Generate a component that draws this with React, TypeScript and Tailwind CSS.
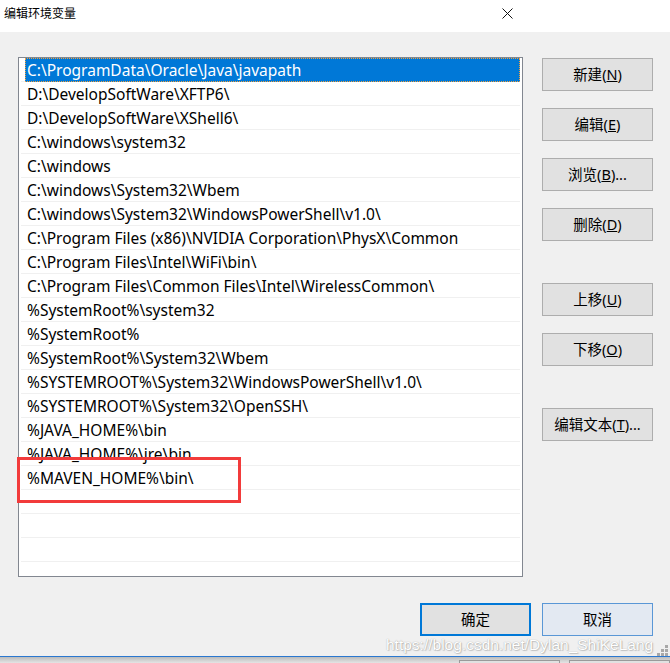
import React from "react";

const items = [
  "C:\\ProgramData\\Oracle\\Java\\javapath",
  "D:\\DevelopSoftWare\\XFTP6\\",
  "D:\\DevelopSoftWare\\XShell6\\",
  "C:\\windows\\system32",
  "C:\\windows",
  "C:\\windows\\System32\\Wbem",
  "C:\\windows\\System32\\WindowsPowerShell\\v1.0\\",
  "C:\\Program Files (x86)\\NVIDIA Corporation\\PhysX\\Common",
  "C:\\Program Files\\Intel\\WiFi\\bin\\",
  "C:\\Program Files\\Common Files\\Intel\\WirelessCommon\\",
  "%SystemRoot%\\system32",
  "%SystemRoot%",
  "%SystemRoot%\\System32\\Wbem",
  "%SYSTEMROOT%\\System32\\WindowsPowerShell\\v1.0\\",
  "%SYSTEMROOT%\\System32\\OpenSSH\\",
  "%JAVA_HOME%\\bin",
  "%JAVA_HOME%\\jre\\bin",
  "%MAVEN_HOME%\\bin\\",
  "",
  "",
  "",
  "",
];

const uiFont = { fontFamily: '"Noto Sans", "Noto Sans CJK SC", sans-serif' };

function Btn({ label, u, tail = "", mt = "" }: { label: string; u: string; tail?: string; mt?: string }) {
  return (
    <div
      className={`h-[33px] w-[111px] border border-[#adadad] bg-[#e1e1e1] flex items-center justify-center text-[14.5px] text-black ${mt}`}
    >
      <span>
        {label}(<u>{u}</u>){tail}
      </span>
    </div>
  );
}

export default function App() {
  return (
    <div className="relative w-[670px] h-[663px] overflow-hidden bg-[#f0f0f0]" style={uiFont}>
      {/* title bar */}
      <div className="h-[32px] bg-white flex items-start justify-between">
        <div className="pl-[4px] pt-[5px] text-[12px] leading-[16px] text-black" style={{ fontFamily: '"Noto Sans CJK SC", sans-serif' }}>
          编辑环境变量
        </div>
        <svg className="mt-[8px] mr-[157px]" width="11" height="11" viewBox="0 0 11 11">
          <path d="M0.5 0.5 L10.5 10.5 M10.5 0.5 L0.5 10.5" stroke="#111" strokeWidth="1" fill="none" />
        </svg>
      </div>

      {/* body */}
      <div className="flex pt-[25px]">
        <div className="ml-[18px] w-[505px] h-[520px] border border-[#828790] bg-white overflow-hidden">
          {items.map((t, i) => (
            <div key={i} className="h-[24px] mx-[2px] border-b border-[#f0f0f0]">
              {i === 0 ? (
                <div className="ml-[4px] h-[24px] -mb-[1px] bg-[#0078d7] border border-dotted border-[#f3a13c] text-white text-[15.5px] leading-[23px] pl-[1px] whitespace-nowrap">
                  {t}
                </div>
              ) : (
                <div className="ml-[6px] h-[23px] text-[15.5px] leading-[24px] text-black whitespace-nowrap">
                  {t}
                </div>
              )}
            </div>
          ))}
        </div>
        <div className="ml-[19px] pt-[1px] flex flex-col">
          <Btn label="新建" u="N" />
          <Btn label="编辑" u="E" mt="mt-[17px]" />
          <Btn label="浏览" u="B" tail="..." mt="mt-[17px]" />
          <Btn label="删除" u="D" mt="mt-[17px]" />
          <Btn label="上移" u="U" mt="mt-[42px]" />
          <Btn label="下移" u="O" mt="mt-[17px]" />
          <Btn label="编辑文本" u="T" tail="..." mt="mt-[42px]" />
        </div>
      </div>

      {/* bottom buttons */}
      <div className="flex justify-end gap-[11px] pr-[17px] mt-[26px]">
        <div className="h-[33px] w-[111px] border-2 border-[#0078d7] bg-[#e1e1e1] flex items-center justify-center text-[14.5px] text-black">
          确定
        </div>
        <div className="h-[33px] w-[111px] border border-[#5a97d6] bg-[#e3e9f2] flex items-center justify-center text-[14.5px] text-black">
          取消
        </div>
      </div>

      {/* window bottom edge */}
      <div className="mt-[20px] h-[1px] bg-[#2a78d0]" />
      <div className="h-[6px] bg-gradient-to-b from-[#bcbcbc] to-[#e4e4e4] flex pl-[459px] gap-[9px] pt-[3px]">
        <div className="w-[111px] h-[3px] border border-b-0 border-[#9a9a9a] bg-[#e1e1e1]" />
        <div className="w-[111px] h-[3px] border border-b-0 border-[#9a9a9a] bg-[#e1e1e1]" />
      </div>

      {/* red annotation */}
      <div className="absolute left-[17px] top-[457px] w-[224px] h-[46px] border-[3px] border-[#f23b3b]" />

      {/* watermark */}
      <div
        className="absolute left-[386px] top-[636px] text-[15.5px] leading-[18px] text-white whitespace-nowrap"
        style={{
          fontFamily: '"Liberation Sans", Arial, sans-serif',
          textShadow: "0 0 1px rgba(90,90,90,0.55), 1px 1px 1px rgba(120,120,120,0.35)",
        }}
      >
        https://blog.csdn.net/Dylan_ShiKeLang
      </div>

      {/* resize grip */}
      <svg className="absolute left-[657px] top-[645px]" width="12" height="11" viewBox="0 0 12 11">
        <rect x="8" y="0" width="3" height="3" fill="#a8a8a8" />
        <rect x="4" y="4" width="3" height="3" fill="#a8a8a8" />
        <rect x="8" y="4" width="3" height="3" fill="#a8a8a8" />
        <rect x="0" y="8" width="3" height="3" fill="#a8a8a8" />
        <rect x="4" y="8" width="3" height="3" fill="#a8a8a8" />
        <rect x="8" y="8" width="3" height="3" fill="#a8a8a8" />
      </svg>
    </div>
  );
}
